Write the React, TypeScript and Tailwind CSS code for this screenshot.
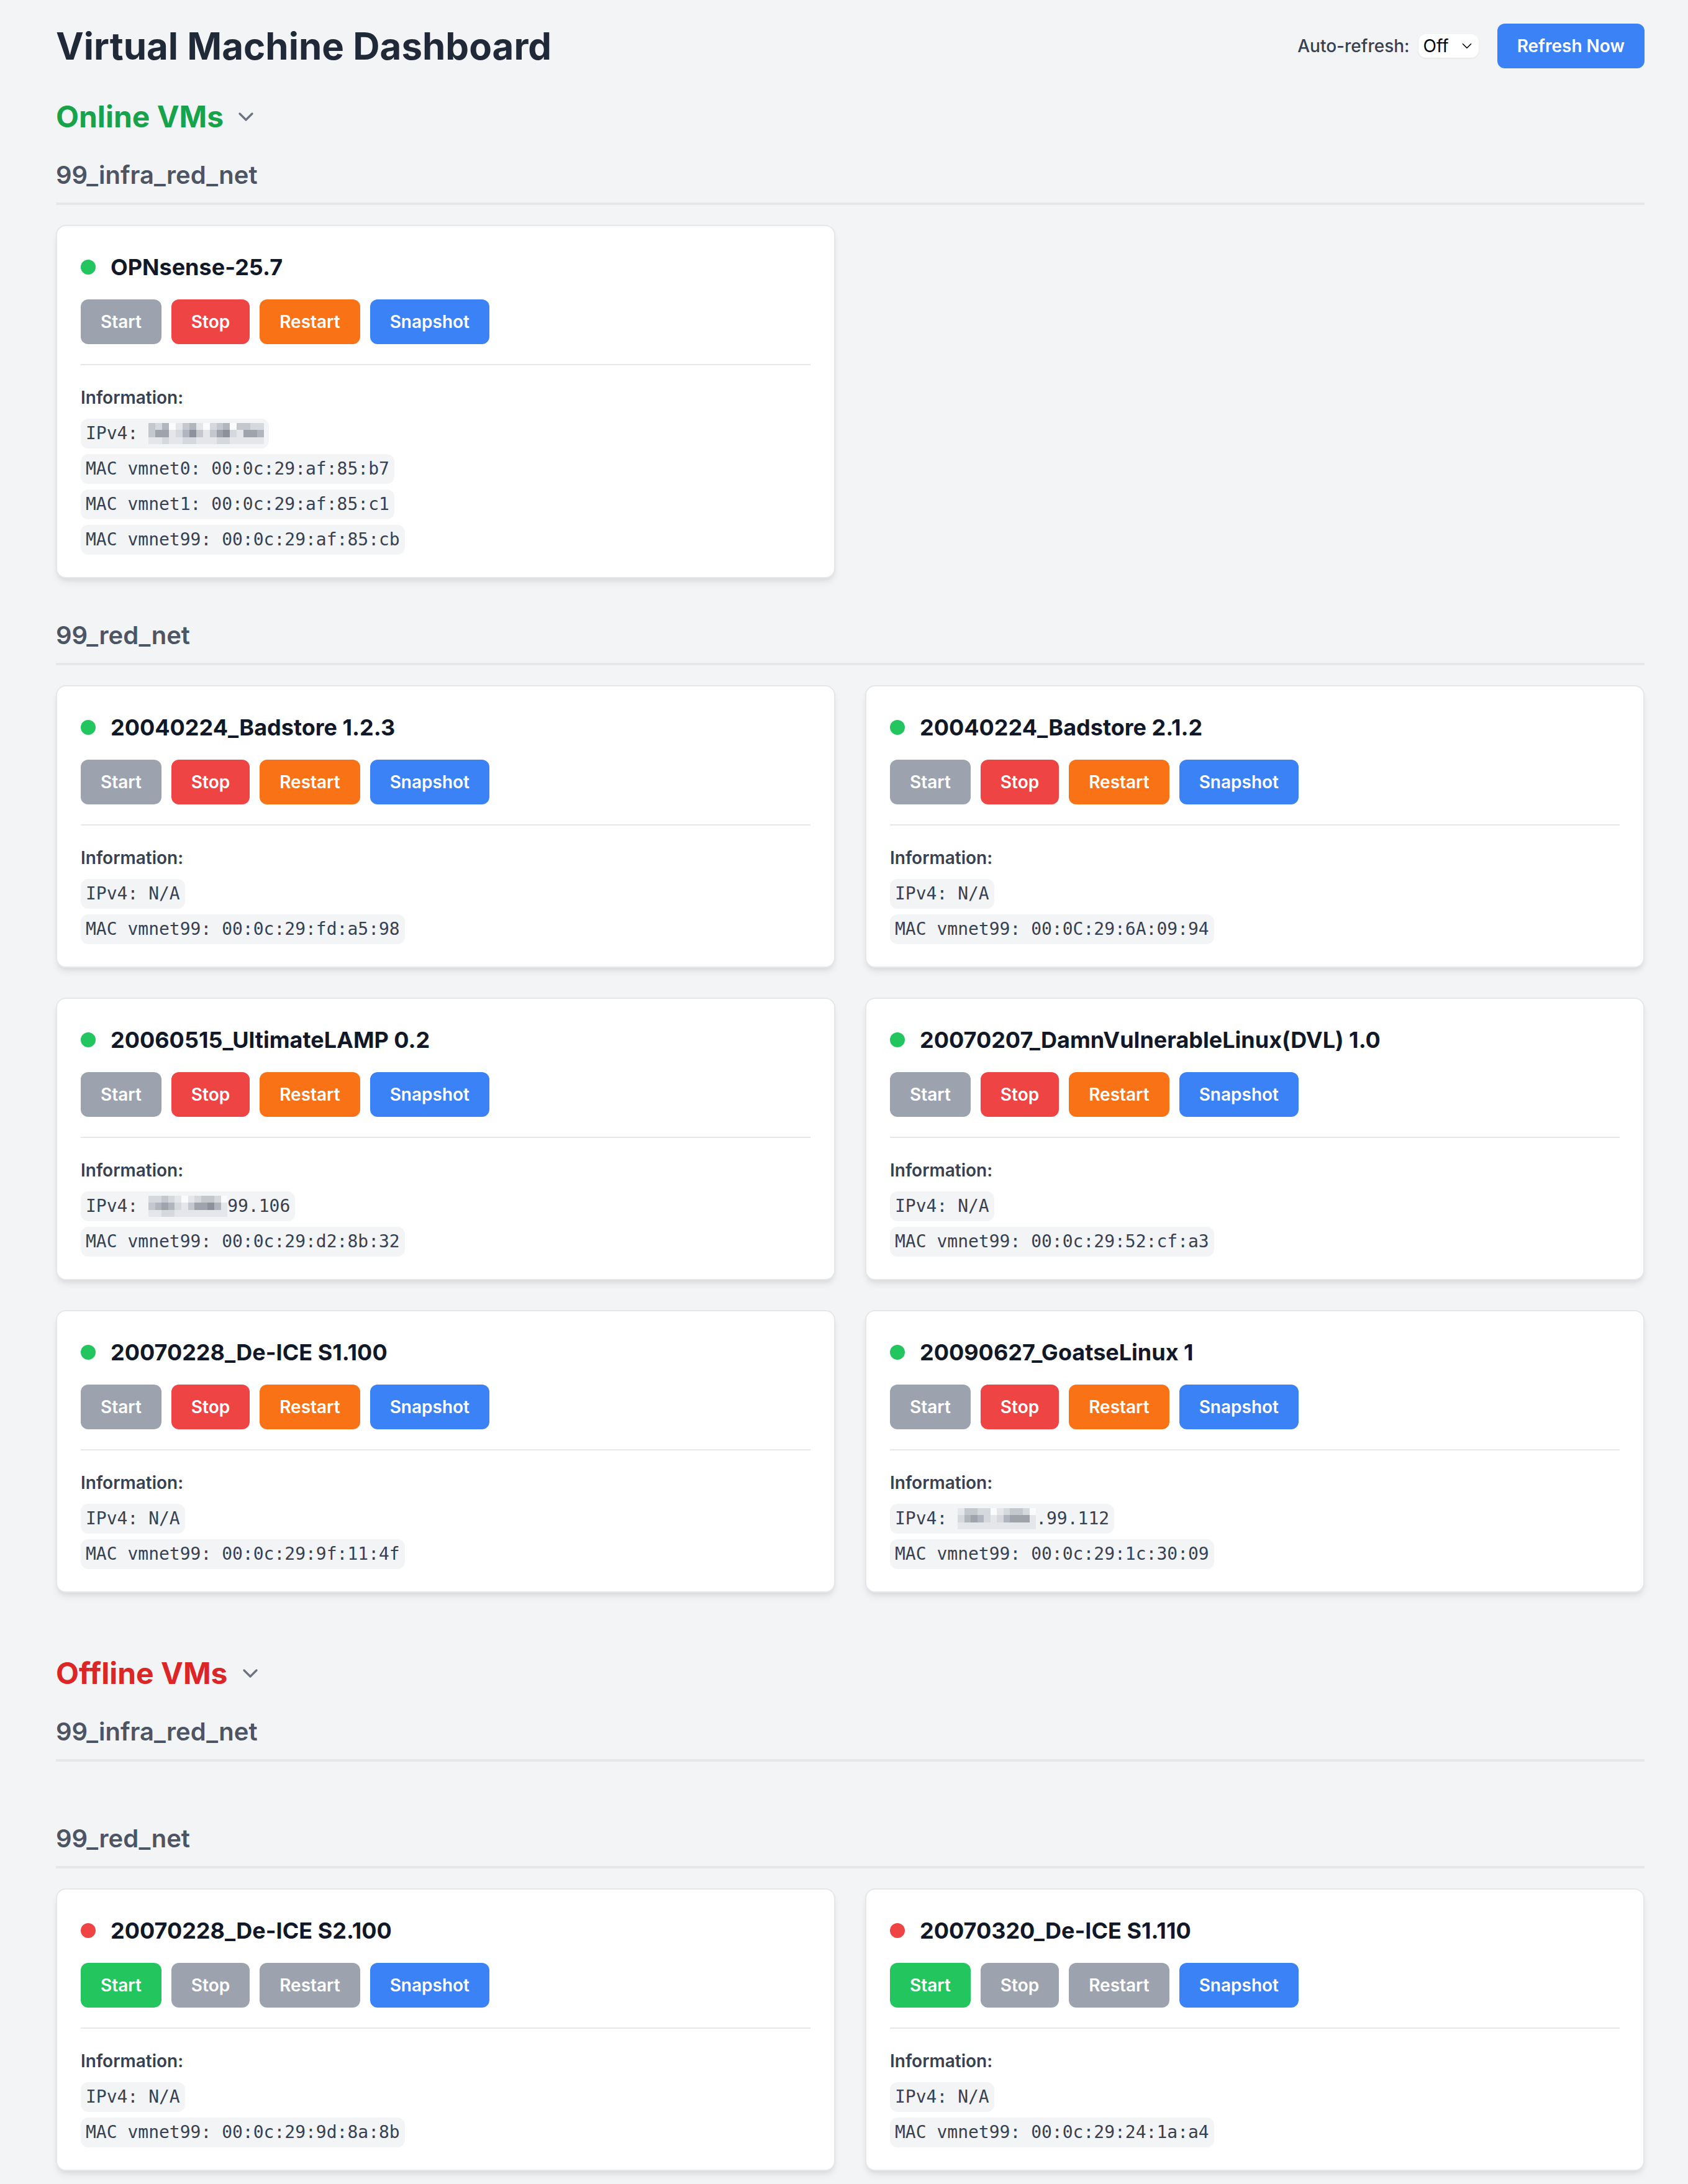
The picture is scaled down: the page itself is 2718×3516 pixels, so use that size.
import { ChevronDown } from "lucide-react";

type Mosaic = string[];

interface IpValue {
  blur?: Mosaic;
  blurWidth?: number;
  text: string;
}

interface Vm {
  name: string;
  ip: IpValue;
  macs: string[];
}

interface Group {
  name: string;
  vms: Vm[];
}

// pixelated blocks standing in for the hidden part of an address
const shade: Record<string, string> = {
  w: "bg-[#fbfbfc]",
  "1": "bg-[#e4e6ea]",
  "2": "bg-[#d5d8dd]",
  "3": "bg-[#c4c7cd]",
  "4": "bg-[#b1b5bd]",
  "5": "bg-[#9ea3ac]",
  "6": "bg-[#8c919b]",
};

const blurFull: Mosaic = [
  "324w1341w234w3322",
  "35512463135621554",
  "11211221112211111",
];

const blurLamp: Mosaic = [
  "22321w12332w",
  "345421355641",
  "112211111111",
];

const blurGoatse: Mosaic = [
  "13322w12332w",
  "245421245551",
  "111111111111",
];

const onlineGroups: Group[] = [
  {
    name: "99_infra_red_net",
    vms: [
      {
        name: "OPNsense-25.7",
        ip: { blur: blurFull, blurWidth: 186, text: "" },
        macs: [
          "MAC vmnet0: 00:0c:29:af:85:b7",
          "MAC vmnet1: 00:0c:29:af:85:c1",
          "MAC vmnet99: 00:0c:29:af:85:cb",
        ],
      },
    ],
  },
  {
    name: "99_red_net",
    vms: [
      { name: "20040224_Badstore 1.2.3", ip: { text: "N/A" }, macs: ["MAC vmnet99: 00:0c:29:fd:a5:98"] },
      { name: "20040224_Badstore 2.1.2", ip: { text: "N/A" }, macs: ["MAC vmnet99: 00:0C:29:6A:09:94"] },
      {
        name: "20060515_UltimateLAMP 0.2",
        ip: { blur: blurLamp, blurWidth: 127, text: "99.106" },
        macs: ["MAC vmnet99: 00:0c:29:d2:8b:32"],
      },
      { name: "20070207_DamnVulnerableLinux(DVL) 1.0", ip: { text: "N/A" }, macs: ["MAC vmnet99: 00:0c:29:52:cf:a3"] },
      { name: "20070228_De-ICE S1.100", ip: { text: "N/A" }, macs: ["MAC vmnet99: 00:0c:29:9f:11:4f"] },
      {
        name: "20090627_GoatseLinux 1",
        ip: { blur: blurGoatse, blurWidth: 126, text: ".99.112" },
        macs: ["MAC vmnet99: 00:0c:29:1c:30:09"],
      },
    ],
  },
];

const offlineGroups: Group[] = [
  { name: "99_infra_red_net", vms: [] },
  {
    name: "99_red_net",
    vms: [
      { name: "20070228_De-ICE S2.100", ip: { text: "N/A" }, macs: ["MAC vmnet99: 00:0c:29:9d:8a:8b"] },
      { name: "20070320_De-ICE S1.110", ip: { text: "N/A" }, macs: ["MAC vmnet99: 00:0c:29:24:1a:a4"] },
    ],
  },
];

const BlurBlock = ({ rows, width }: { rows: Mosaic; width: number }) => (
  <span className="inline-flex flex-col h-[34px]" style={{ width }}>
    {rows.map((row, r) => (
      <span key={r} className="flex flex-1">
        {row.split("").map((c, i) => (
          <span key={i} className={`flex-1 ${shade[c]}`} />
        ))}
      </span>
    ))}
  </span>
);

const Chip = ({ children }: { children: React.ReactNode }) => (
  <span className="inline-flex items-center h-[48px] px-[8px] rounded-[12px] bg-[#f3f4f6] font-['DejaVu_Sans_Mono',monospace] text-[28px] text-[#374151] whitespace-pre">
    {children}
  </span>
);

const ActionButton = ({ label, color }: { label: string; color: string }) => (
  <button className={`h-[72px] px-[32px] rounded-[12px] text-[28px] leading-[40px] font-semibold text-white ${color}`}>
    {label}
  </button>
);

const VmCard = ({ vm, online }: { vm: Vm; online: boolean }) => (
  <div className="bg-white rounded-[16px] border-[2px] border-[#e5e7eb] shadow-[0_8px_12px_-2px_rgba(0,0,0,0.08),0_4px_8px_-4px_rgba(0,0,0,0.08)] px-[38px] pt-[38px] pb-[36px]">
    <div className="flex items-center mb-[24px]">
      <span className={`w-[24px] h-[24px] rounded-full mr-[24px] ${online ? "bg-[#22c55e]" : "bg-[#ef4444]"}`} />
      <h4 className="text-[36px] leading-[56px] font-bold text-[#111827]">{vm.name}</h4>
    </div>
    <div className="flex gap-[16px] mb-[32px]">
      <ActionButton label="Start" color={online ? "bg-[#9ca3af]" : "bg-[#22c55e]"} />
      <ActionButton label="Stop" color={online ? "bg-[#ef4444]" : "bg-[#9ca3af]"} />
      <ActionButton label="Restart" color={online ? "bg-[#f97316]" : "bg-[#9ca3af]"} />
      <ActionButton label="Snapshot" color="bg-[#3b82f6]" />
    </div>
    <div className="border-t-[2px] border-[#e5e7eb] pt-[32px]">
      <p className="text-[28px] leading-[40px] font-semibold text-[#374151] mb-[14px]">Information:</p>
      <div className="flex flex-col items-start gap-[9px]">
        <Chip>
          {"IPv4: "}
          {vm.ip.blur && <BlurBlock rows={vm.ip.blur} width={vm.ip.blurWidth ?? 120} />}
          {vm.ip.text}
        </Chip>
        {vm.macs.map((mac) => (
          <Chip key={mac}>{mac}</Chip>
        ))}
      </div>
    </div>
  </div>
);

const VmSection = ({ title, color, groups, online }: { title: string; color: string; groups: Group[]; online: boolean }) => (
  <section>
    <div className="flex items-center mb-[34px]">
      <h2 className={`text-[48px] leading-[64px] font-bold ${color}`}>{title}</h2>
      <ChevronDown className="ml-[16px] w-[40px] h-[40px] text-[#6b7280]" strokeWidth={2} />
    </div>
    <div className="flex flex-col gap-[64px]">
      {groups.map((group) => (
        <div key={group.name}>
          <h3 className="text-[40px] leading-[56px] font-semibold text-[#4b5563] pb-[16px] border-b-[4px] border-[#e5e7eb] mb-[32px]">
            {group.name}
          </h3>
          <div className="grid grid-cols-2 gap-[48px] items-start">
            {group.vms.map((vm) => (
              <VmCard key={vm.name} vm={vm} online={online} />
            ))}
          </div>
        </div>
      ))}
    </div>
  </section>
);

const App = () => {
  return (
    <div className="min-h-screen bg-[#f3f4f6] font-[Inter,sans-serif] pl-[90px] pr-[70px] pt-[38px] pb-[22px]">
      <header className="flex items-center justify-between mb-[46px]">
        <h1 className="text-[60px] leading-[72px] font-bold text-[#1f2937]">Virtual Machine Dashboard</h1>
        <div className="flex items-center gap-[30px]">
          <div className="flex items-center gap-[14px]">
            <span className="text-[28px] leading-[40px] font-medium text-[#374151]">Auto-refresh:</span>
            <div className="flex items-center h-[38px] pl-[8px] pr-[6px] gap-[16px] bg-white rounded-[12px] shadow-[0_1px_3px_rgba(0,0,0,0.08)]">
              <span className="text-[28px] leading-[38px] text-black">Off</span>
              <ChevronDown className="w-[26px] h-[26px] text-black" strokeWidth={1.5} />
            </div>
          </div>
          <button className="h-[72px] px-[32px] rounded-[12px] bg-[#3b82f6] text-white text-[28px] leading-[40px] font-semibold">
            Refresh Now
          </button>
        </div>
      </header>

      <div className="flex flex-col gap-[98px]">
        <VmSection title="Online VMs" color="text-[#16a34a]" groups={onlineGroups} online />
        <VmSection title="Offline VMs" color="text-[#dc2626]" groups={offlineGroups} online={false} />
      </div>
    </div>
  );
};

export default App;
